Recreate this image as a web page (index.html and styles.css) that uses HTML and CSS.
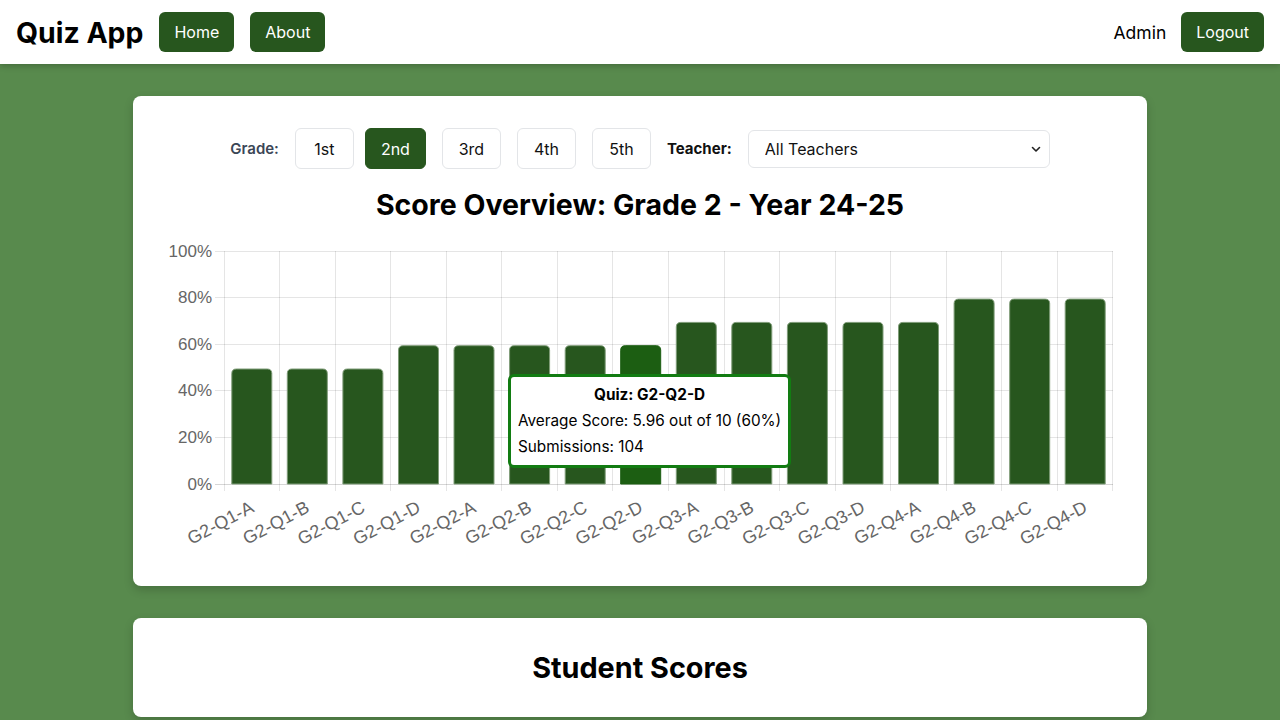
FILE: index.html
```html
<!DOCTYPE html>
<html lang="en">
<head>
<meta charset="utf-8">
<title>Quiz App</title>
<link rel="stylesheet" href="styles.css">
</head>
<body>
<header class="topbar">
  <div class="brand">Quiz App</div>
  <nav class="nav">
    <a class="btn" href="#">Home</a>
    <a class="btn" href="#">About</a>
  </nav>
  <div class="spacer"></div>
  <span class="user">Admin</span>
  <a class="btn" href="#">Logout</a>
</header>

<main class="main">
  <section class="card chart-card">
    <div class="filters">
      <span class="grade-label">Grade:</span>
      <button class="grade-btn">1st</button>
      <button class="grade-btn active">2nd</button>
      <button class="grade-btn">3rd</button>
      <button class="grade-btn">4th</button>
      <button class="grade-btn">5th</button>
      <span class="teacher-label">Teacher:</span>
      <span class="select-wrap">
        <select class="teacher-select">
          <option>All Teachers</option>
        </select>
        <svg class="chev" width="10" height="10" viewBox="0 0 10 10"><path d="M1.5 3.5 L5 7 L8.5 3.5" fill="none" stroke="#222" stroke-width="1.6" stroke-linecap="round" stroke-linejoin="round"/></svg>
      </span>
    </div>
    <h2 class="chart-title">Score Overview: Grade 2 - Year 24-25</h2>
    <div class="chart">
      <svg class="chart-svg" width="950" height="320" viewBox="0 0 950 320">
        <g class="grid">
          <line x1="50" y1="17.5" x2="948" y2="17.5"/>
          <line x1="50" y1="63.5" x2="948" y2="63.5"/>
          <line x1="50" y1="110.5" x2="948" y2="110.5"/>
          <line x1="50" y1="156.5" x2="948" y2="156.5"/>
          <line x1="50" y1="203.5" x2="948" y2="203.5"/>
          <line x1="59.5" y1="17" x2="59.5" y2="257"/>
          <line x1="114.5" y1="17" x2="114.5" y2="257"/>
          <line x1="170.5" y1="17" x2="170.5" y2="257"/>
          <line x1="225.5" y1="17" x2="225.5" y2="257"/>
          <line x1="281.5" y1="17" x2="281.5" y2="257"/>
          <line x1="336.5" y1="17" x2="336.5" y2="257"/>
          <line x1="392.5" y1="17" x2="392.5" y2="257"/>
          <line x1="447.5" y1="17" x2="447.5" y2="257"/>
          <line x1="503.5" y1="17" x2="503.5" y2="257"/>
          <line x1="559.5" y1="17" x2="559.5" y2="257"/>
          <line x1="614.5" y1="17" x2="614.5" y2="257"/>
          <line x1="670.5" y1="17" x2="670.5" y2="257"/>
          <line x1="725.5" y1="17" x2="725.5" y2="257"/>
          <line x1="781.5" y1="17" x2="781.5" y2="257"/>
          <line x1="836.5" y1="17" x2="836.5" y2="257"/>
          <line x1="892.5" y1="17" x2="892.5" y2="257"/>
          <line x1="947.5" y1="17" x2="947.5" y2="257"/>
        </g>
        <line class="axis" x1="50" y1="250.5" x2="948" y2="250.5"/>
        <g class="bars">
          <path d="M66.8 250V139.5Q66.8 135 71.3 135H102.3Q106.8 135 106.8 139.5V250Z"/>
          <path d="M122.3 250V139.5Q122.3 135 126.8 135H157.8Q162.3 135 162.3 139.5V250Z"/>
          <path d="M177.9 250V139.5Q177.9 135 182.4 135H213.4Q217.9 135 217.9 139.5V250Z"/>
          <path d="M233.5 250V116.2Q233.5 111.7 238 111.7H269Q273.5 111.7 273.5 116.2V250Z"/>
          <path d="M289 250V116.2Q289 111.7 293.5 111.7H324.5Q329 111.7 329 116.2V250Z"/>
          <path d="M344.6 250V116.2Q344.6 111.7 349.1 111.7H380.1Q384.6 111.7 384.6 116.2V250Z"/>
          <path d="M400.2 250V116.2Q400.2 111.7 404.7 111.7H435.7Q440.2 111.7 440.2 116.2V250Z"/>
          <path class="hover" d="M455.7 250V116.2Q455.7 111.7 460.2 111.7H491.2Q495.7 111.7 495.7 116.2V250Z"/>
          <path d="M511.3 250V92.9Q511.3 88.4 515.8 88.4H546.8Q551.3 88.4 551.3 92.9V250Z"/>
          <path d="M566.8 250V92.9Q566.8 88.4 571.3 88.4H602.3Q606.8 88.4 606.8 92.9V250Z"/>
          <path d="M622.4 250V92.9Q622.4 88.4 626.9 88.4H657.9Q662.4 88.4 662.4 92.9V250Z"/>
          <path d="M678 250V92.9Q678 88.4 682.5 88.4H713.5Q718 88.4 718 92.9V250Z"/>
          <path d="M733.5 250V92.9Q733.5 88.4 738 88.4H769Q773.5 88.4 773.5 92.9V250Z"/>
          <path d="M789.1 250V69.6Q789.1 65.1 793.6 65.1H824.6Q829.1 65.1 829.1 69.6V250Z"/>
          <path d="M844.7 250V69.6Q844.7 65.1 849.2 65.1H880.2Q884.7 65.1 884.7 69.6V250Z"/>
          <path d="M900.2 250V69.6Q900.2 65.1 904.7 65.1H935.7Q940.2 65.1 940.2 69.6V250Z"/>
        </g>
        <g class="ylabels">
          <text x="47" y="23">100%</text>
          <text x="47" y="69">80%</text>
          <text x="47" y="116">60%</text>
          <text x="47" y="162">40%</text>
          <text x="47" y="209">20%</text>
          <text x="47" y="256">0%</text>
        </g>
        <g class="xlabels">
          <text transform="translate(87.8 273) rotate(-28)">G2-Q1-A</text>
          <text transform="translate(143.3 273) rotate(-28)">G2-Q1-B</text>
          <text transform="translate(198.9 273) rotate(-28)">G2-Q1-C</text>
          <text transform="translate(254.5 273) rotate(-28)">G2-Q1-D</text>
          <text transform="translate(310 273) rotate(-28)">G2-Q2-A</text>
          <text transform="translate(365.6 273) rotate(-28)">G2-Q2-B</text>
          <text transform="translate(421.2 273) rotate(-28)">G2-Q2-C</text>
          <text transform="translate(476.7 273) rotate(-28)">G2-Q2-D</text>
          <text transform="translate(532.3 273) rotate(-28)">G2-Q3-A</text>
          <text transform="translate(587.8 273) rotate(-28)">G2-Q3-B</text>
          <text transform="translate(643.4 273) rotate(-28)">G2-Q3-C</text>
          <text transform="translate(699 273) rotate(-28)">G2-Q3-D</text>
          <text transform="translate(754.5 273) rotate(-28)">G2-Q4-A</text>
          <text transform="translate(810.1 273) rotate(-28)">G2-Q4-B</text>
          <text transform="translate(865.7 273) rotate(-28)">G2-Q4-C</text>
          <text transform="translate(921.2 273) rotate(-28)">G2-Q4-D</text>
        </g>
      </svg>
      <div class="tooltip">
        <div class="tt-title">Quiz: G2-Q2-D</div>
        <div class="tt-line">Average Score: 5.96 out of 10 (60%)</div>
        <div class="tt-line">Submissions: 104</div>
      </div>
    </div>
  </section>

  <section class="card scores-card">
    <h2 class="section-title">Student Scores</h2>
  </section>
</main>
</body>
</html>
```

FILE: styles.css
```css
* { box-sizing: border-box; }

html, body {
  margin: 0;
  padding: 0;
}

body {
  font-family: Inter, "Noto Sans", "Liberation Sans", sans-serif;
  background: #588a4d;
  color: #000;
  height: 720px;
  overflow: hidden;
}

.topbar {
  height: 64px;
  background: #ffffff;
  display: flex;
  align-items: center;
  padding: 0 16px;
  box-shadow: 0 2px 6px rgba(0, 0, 0, 0.22);
  position: relative;
  z-index: 1;
}

.brand {
  font-size: 28.4px;
  font-weight: 700;
  margin-right: 16px;
}

.nav {
  display: flex;
  gap: 16px;
}

.spacer { flex: 1; }

.btn {
  display: inline-flex;
  align-items: center;
  justify-content: center;
  height: 40px;
  padding: 0 15px;
  background: #27561e;
  color: #ffffff;
  border-radius: 6px;
  text-decoration: none;
  font-size: 16px;
  font-weight: 400;
}

.user {
  font-size: 17.5px;
  font-weight: 400;
  margin-right: 15px;
}

.main {
  width: 1014px;
  margin: 0 auto;
  padding-top: 32px;
  display: flex;
  flex-direction: column;
  gap: 32px;
}

.card {
  background: #ffffff;
  border-radius: 8px;
  box-shadow: 0 4px 10px rgba(0, 0, 0, 0.18);
}

.chart-card {
  padding: 32px 32px 32px;
}

.filters {
  display: flex;
  align-items: center;
  justify-content: center;
  gap: 16px;
  height: 41px;
}

.grade-label {
  font-size: 15px;
  font-weight: 600;
  color: #3b4656;
}

.grade-btn {
  font-family: inherit;
  height: 41px;
  min-width: 59px;
  padding: 0 14px;
  background: #ffffff;
  border: 1px solid #e3e5e8;
  border-radius: 6px;
  font-size: 16px;
  color: #111;
}

.grade-btn.active {
  background: #27561e;
  border-color: #27561e;
  color: #ffffff;
  margin-left: -5px;
  min-width: 61px;
}

.teacher-label {
  font-size: 15px;
  font-weight: 700;
  color: #111;
}

.select-wrap {
  position: relative;
  display: inline-block;
}

.teacher-select {
  appearance: none;
  -webkit-appearance: none;
  font-family: inherit;
  width: 302px;
  height: 38px;
  padding: 0 30px 0 16px;
  border: 1px solid #e3e5e8;
  border-radius: 6px;
  background: #ffffff;
  font-size: 16px;
  color: #111;
}

.chev {
  position: absolute;
  right: 9px;
  top: 14px;
  pointer-events: none;
}

.chart-title {
  margin: 19px 0 12px;
  text-align: center;
  font-size: 28.5px;
  line-height: 34px;
  font-weight: 700;
}

.chart {
  position: relative;
  height: 320px;
}

.chart-svg {
  display: block;
}

.grid line {
  stroke: rgba(0, 0, 0, 0.1);
  stroke-width: 1;
}

.axis {
  stroke: rgba(0, 0, 0, 0.16);
  stroke-width: 1;
}

.bars path {
  fill: #27561e;
  stroke: #7f9c78;
  stroke-width: 1;
}

.bars path.hover {
  fill: #1c5e12;
  stroke: #1c5e12;
}

.ylabels text {
  font-family: "Liberation Sans", Arial, sans-serif;
  font-size: 17px;
  fill: #666666;
  text-anchor: end;
}

.xlabels text {
  font-family: "Liberation Sans", Arial, sans-serif;
  font-size: 18px;
  fill: #666666;
  text-anchor: end;
  dominant-baseline: middle;
}

.tooltip {
  position: absolute;
  left: 343px;
  top: 140px;
  background: #ffffff;
  border: 3px solid #127c12;
  border-radius: 6px;
  padding: 5px 7px 5px;
  font-size: 15.3px;
  line-height: 26px;
  color: #000;
  white-space: nowrap;
}

.tt-title {
  text-align: center;
  font-weight: 700;
}

.scores-card {
  padding: 33px 32px 32px;
}

.section-title {
  margin: 0;
  text-align: center;
  font-size: 28.8px;
  line-height: 34px;
  font-weight: 700;
}
```
